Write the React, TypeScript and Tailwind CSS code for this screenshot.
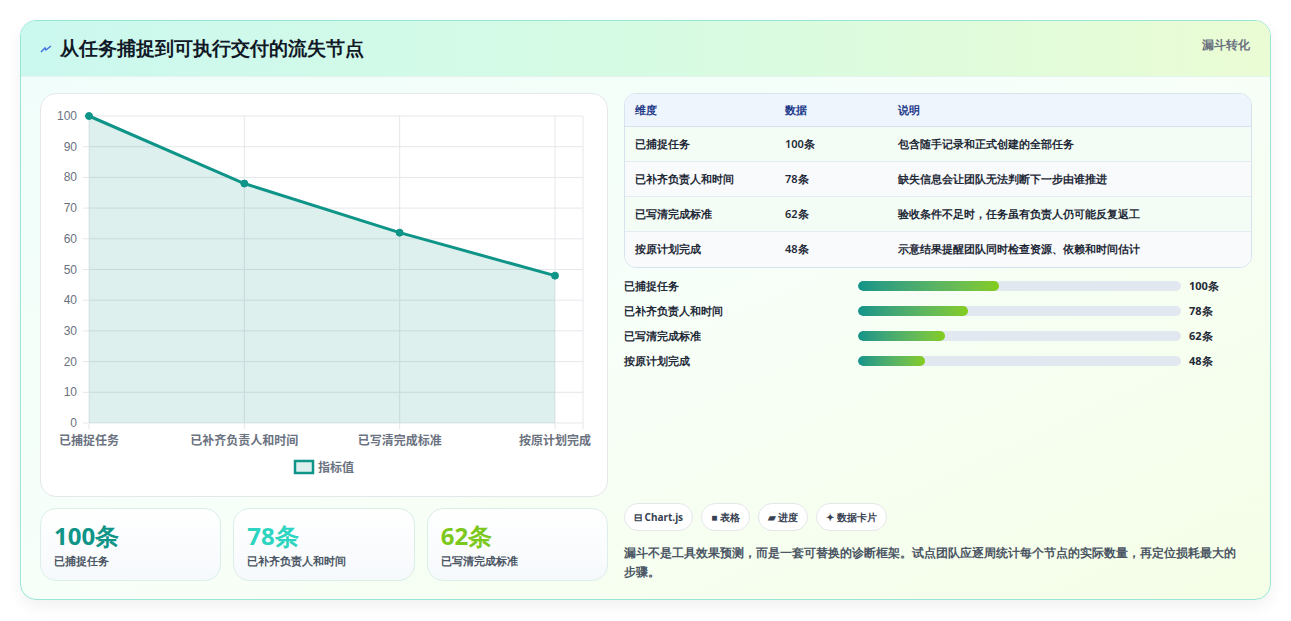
import React from 'react';

const rows = [
  { name: '已捕捉任务', v: 100, note: '包含随手记录和正式创建的全部任务' },
  { name: '已补齐负责人和时间', v: 78, note: '缺失信息会让团队无法判断下一步由谁推进' },
  { name: '已写清完成标准', v: 62, note: '验收条件不足时，任务虽有负责人仍可能反复返工' },
  { name: '按原计划完成', v: 48, note: '示意结果提醒团队同时检查资源、依赖和时间估计' },
];

function Chart() {
  const x0 = 48, x1 = 514, y0 = 22, y1 = 329;
  const xs = [0, 1, 2, 3].map(i => x0 + ((x1 - x0) / 3) * i);
  const ys = (v: number) => y1 - ((y1 - y0) * v) / 100;
  const pts = rows.map((r, i) => `${xs[i]},${ys(r.v)}`).join(' ');
  return (
    <svg width="568" height="403" className="block">
      {[0, 10, 20, 30, 40, 50, 60, 70, 80, 90, 100].map(t => (
        <g key={t}>
          <line x1={x0 - 6} x2={x1 + 28} y1={ys(t)} y2={ys(t)} stroke="#e5e7eb" />
          <text x={x0 - 12} y={ys(t) + 4} textAnchor="end" fontSize="12" fill="#6b7280" fontFamily="Liberation Sans, sans-serif">{t}</text>
        </g>
      ))}
      {[...xs, x1 + 28].map((x, i) => (
        <line key={i} x1={x} x2={x} y1={y0} y2={y1 + 6} stroke="#e5e7eb" />
      ))}
      <polygon points={`${x0},${y1} ${pts} ${x1},${y1}`} fill="#0f9488" fillOpacity="0.14" />
      <polyline points={pts} fill="none" stroke="#0f9488" strokeWidth="3" />
      {rows.map((r, i) => (
        <circle key={i} cx={xs[i]} cy={ys(r.v)} r="3.5" fill="#0f9488" stroke="#0f9488" strokeWidth="1" />
      ))}
      {rows.map((r, i) => (
        <text key={r.name} x={xs[i]} y={y1 + 22} textAnchor="middle" fontSize="12" fontWeight="600" fill="#6b7280" fontFamily="Noto Sans CJK SC, sans-serif">{r.name}</text>
      ))}
      <rect x="254" y="367" width="18" height="12" fill="#0f9488" fillOpacity="0.14" stroke="#0f9488" strokeWidth="2.5" />
      <text x="277" y="378" fontSize="12" fontWeight="600" fill="#6b7280" fontFamily="Noto Sans CJK SC, sans-serif">指标值</text>
    </svg>
  );
}

export default function App() {
  return (
    <div className="min-h-screen bg-white pt-5 pl-5 pr-[20px] font-['Liberation_Sans','Noto_Sans_CJK_SC',sans-serif]">
      <div className="rounded-2xl border border-[#99e6d6] bg-gradient-to-br from-[#effdfa] via-[#f7fff9] to-[#f5fee6] overflow-hidden shadow-[0_6px_16px_rgba(0,0,0,0.06)]">
        <div className="h-14 flex items-center justify-between pl-[19px] pr-5 bg-gradient-to-r from-[#cbf8ef] via-[#d6fbe3] to-[#eafcd4] border-b border-[#e3f3ee]">
          <div className="flex items-center gap-2">
            <svg width="12" height="8" viewBox="0 0 12 8"><path d="M1 7 L5 3 L6 5 L11 1" fill="none" stroke="#3b6fe0" strokeWidth="1.4" /></svg>
            <h1 className="text-[19px] font-bold text-[#111827]">从任务捕捉到可执行交付的流失节点</h1>
          </div>
          <span className="text-xs font-bold text-[#6b7280] self-start mt-[16px]">漏斗转化</span>
        </div>
        <div className="flex gap-4 pl-[19px] pr-[18px] pt-4 pb-[18px]">
          <div className="w-[568px] flex flex-col gap-[11px]">
            <div className="rounded-2xl bg-white border border-[#e5e7eb] h-[404px]">
              <Chart />
            </div>
            <div className="grid grid-cols-3 gap-3">
              {[
                ['100条', '已捕捉任务', 'text-[#0f9488]'],
                ['78条', '已补齐负责人和时间', 'text-[#2dd4bf]'],
                ['62条', '已写清完成标准', 'text-[#7cc81c]'],
              ].map(([n, l, c]) => (
                <div key={l} className="h-[73px] rounded-2xl border border-[#dbeee8] bg-gradient-to-b from-white to-[#f6f9fc] px-[13px] pt-[12px]">
                  <div className={`text-[24px] font-bold leading-[30px] ${c}`}>{n}</div>
                  <div className="text-[11px] font-semibold text-[#4b5563] mt-[2px]">{l}</div>
                </div>
              ))}
            </div>
          </div>
          <div className="flex-1 flex flex-col">
            <div className="rounded-xl border border-[#d6e2ee] overflow-hidden bg-white text-[11px] font-semibold text-[#1f2937]">
              <div className="grid grid-cols-[150px_113px_1fr] px-[10px] h-[33px] items-center bg-[#eef5fd] text-[#1e3a8a] font-bold border-b border-[#d6e2ee]">
                <span>维度</span><span>数据</span><span>说明</span>
              </div>
              {rows.map((r, i) => (
                <div key={r.name} className={`grid grid-cols-[150px_113px_1fr] px-[10px] h-[35px] items-center ${i % 2 ? 'bg-[#f8fafc]' : 'bg-[#f3fdf6]'} ${i < 3 ? 'border-b border-[#e5ecf2]' : ''}`}>
                  <span>{r.name}</span><span>{r.v}条</span><span>{r.note}</span>
                </div>
              ))}
            </div>
            <div className="flex flex-col gap-[9px] mt-[10px]">
              {rows.map(r => (
                <div key={r.name} className="flex items-center h-4 text-[11px] font-semibold text-[#1f2937]">
                  <span className="w-[234px]">{r.name}</span>
                  <div className="w-[323px] h-[10px] rounded-full bg-[#e2e8f0] overflow-hidden">
                    <div className="h-full rounded-full bg-gradient-to-r from-[#0f9488] to-[#84cc16]" style={{ width: `${r.v * 0.435}%` }} />
                  </div>
                  <span className="ml-2 font-bold">{r.v}条</span>
                </div>
              ))}
            </div>
            <div className="mt-auto">
              <div className="flex gap-2 text-[10px] font-bold text-[#374151]">
                {['⊟ Chart.js', '■ 表格', '▰ 进度', '✦ 数据卡片'].map(t => (
                  <span key={t} className="h-[28px] px-[9px] rounded-full border border-[#e5e7eb] bg-white flex items-center">{t}</span>
                ))}
              </div>
              <p className="mt-[12px] pr-[10px] text-[12px] leading-[19px] text-[#4b5563] font-semibold">
                漏斗不是工具效果预测，而是一套可替换的诊断框架。试点团队应逐周统计每个节点的实际数量，再定位损耗最大的步骤。
              </p>
            </div>
          </div>
        </div>
      </div>
    </div>
  );
}
